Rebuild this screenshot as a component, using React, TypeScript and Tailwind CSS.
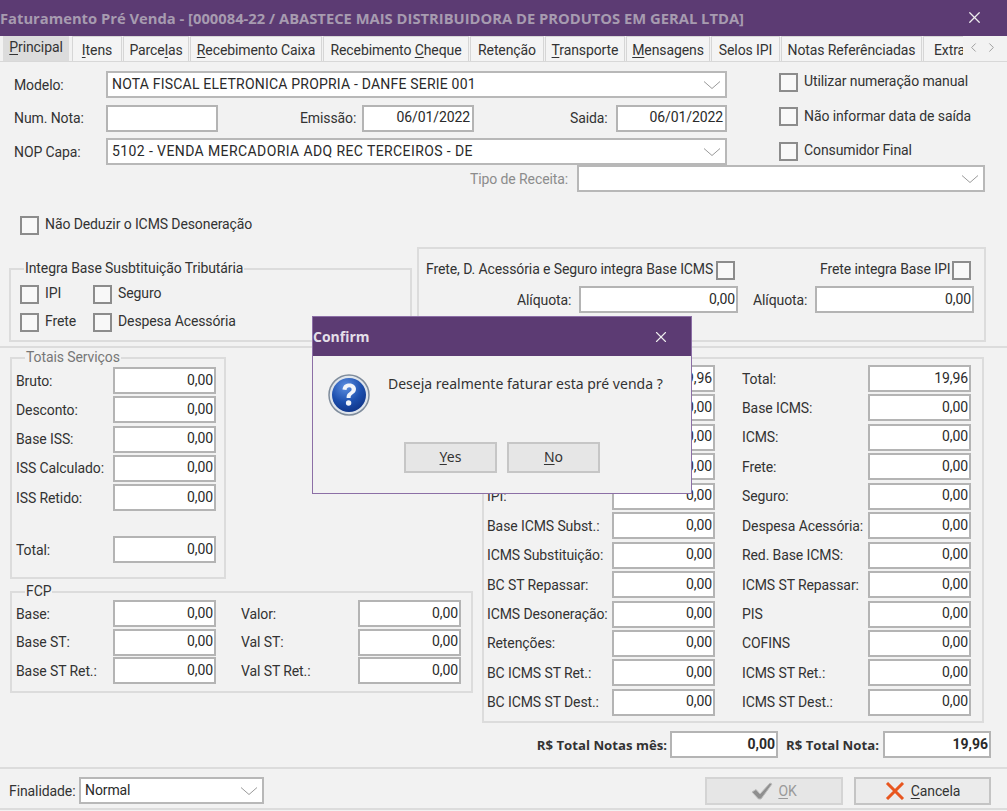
import React from "react";
import { ChevronLeft, ChevronRight, X } from "lucide-react";

const tabs = [
  { before: "", key: "P", after: "rincipal", w: "w-[66px]", active: true },
  { before: "", key: "I", after: "tens", w: "w-[50px]" },
  { before: "Parce", key: "l", after: "as", w: "w-[66px]" },
  { before: "", key: "R", after: "ecebimento Caixa", w: "w-[132px]" },
  { before: "Recebimento ", key: "C", after: "heque", w: "w-[146px]" },
  { before: "Retenção", key: "", after: "", w: "w-[74px]" },
  { before: "", key: "T", after: "ransporte", w: "w-[80px]" },
  { before: "", key: "M", after: "ensagens", w: "w-[84px]" },
  { before: "Selos IPI", key: "", after: "", w: "w-[69px]" },
  { before: "Notas Referênciadas", key: "", after: "", w: "w-[141px]" },
];

const servicos = ["Bruto:", "Desconto:", "Base ISS:", "ISS Calculado:", "ISS Retido:"];

const fcp = [
  ["Base:", "Valor:"],
  ["Base ST:", "Val ST:"],
  ["Base ST Ret.:", "Val ST Ret.:"],
];

const totais = [
  ["", "19,96", "Total:", "19,96"],
  ["", "0,00", "Base ICMS:", "0,00"],
  ["", "0,00", "ICMS:", "0,00"],
  ["", "0,00", "Frete:", "0,00"],
  ["IPI:", "0,00", "Seguro:", "0,00"],
  ["Base ICMS Subst.:", "0,00", "Despesa Acessória:", "0,00"],
  ["ICMS Substituição:", "0,00", "Red. Base ICMS:", "0,00"],
  ["BC ST Repassar:", "0,00", "ICMS ST Repassar:", "0,00"],
  ["ICMS Desoneração:", "0,00", "PIS", "0,00"],
  ["Retenções:", "0,00", "COFINS", "0,00"],
  ["BC ICMS ST Ret.:", "0,00", "ICMS ST Ret.:", "0,00"],
  ["BC ICMS ST Dest.:", "0,00", "ICMS ST Dest.:", "0,00"],
];

const Field = ({ value = "0,00", className = "w-[103px]", bold = false }: { value?: string; className?: string; bold?: boolean }) => (
  <div
    className={`h-[27px] shrink-0 bg-white border-2 border-[#b4b4b4] flex items-center justify-end pr-[1px] pb-[2px] text-[#2a2a2a] ${bold ? "font-bold" : ""} ${className}`}
  >
    {value}
  </div>
);

const Combo = ({ value = "", className = "" }: { value?: string; className?: string }) => (
  <div className={`h-[27px] bg-white border-2 border-[#b8b8b8] flex items-center justify-between pl-[4px] pr-[4px] pb-[2px] text-[#2a2a2a] ${className}`}>
    <span className="whitespace-nowrap">{value}</span>
    <svg width="18" height="10" viewBox="0 0 18 10" fill="none" stroke="#9a9a9a" strokeWidth="1" className="shrink-0 mt-[2px]">
      <path d="M1 1.5 L9 8.5 L17 1.5" />
    </svg>
  </div>
);

const Check = ({ label, className = "" }: { label?: string; className?: string }) => (
  <div className={`flex items-center gap-[6px] whitespace-nowrap text-[#333] ${className}`}>
    <div className="w-[19px] h-[19px] shrink-0 bg-[#f8f8f8] border-2 border-[#8c8c8c]" />
    {label && <span className="pb-[2px]">{label}</span>}
  </div>
);

const Group = ({ title, muted, className, children }: { title?: string; muted?: boolean; className: string; children: React.ReactNode }) => (
  <div className={`relative border-2 border-[#dcdcdc] ${className}`}>
    {title && (
      <span className={`absolute left-[13px] top-[-11px] h-[18px] leading-[18px] bg-[#f2f2f2] px-[1px] whitespace-nowrap ${muted ? "text-[#777]" : "text-[#333]"}`}>
        {title}
      </span>
    )}
    {children}
  </div>
);

const Key = ({ children }: { children: React.ReactNode }) => <span className="underline underline-offset-2">{children}</span>;

const HelpIcon = () => (
  <svg width="42" height="42" viewBox="0 0 42 42" className="shrink-0">
    <defs>
      <radialGradient id="helpFill" cx="40%" cy="25%" r="85%">
        <stop offset="0%" stopColor="#5d8fe0" />
        <stop offset="55%" stopColor="#1c4fae" />
        <stop offset="100%" stopColor="#0d2f80" />
      </radialGradient>
    </defs>
    <circle cx="21" cy="21" r="20" fill="#dfe5ec" stroke="#7f8c9c" strokeWidth="1.5" />
    <circle cx="21" cy="21" r="17" fill="url(#helpFill)" />
    <path
      d="M14.5 15.5 C15 11 18 9.5 21.5 9.5 C25.5 9.5 28 12 28 15 C28 18 26 19.3 24.3 20.5 C23 21.4 22.6 22.2 22.6 24 L18.6 24 C18.4 21.4 19.2 19.8 21.2 18.4 C22.8 17.3 23.6 16.6 23.6 15.3 C23.6 14 22.7 13.2 21.2 13.2 C19.6 13.2 18.7 14.2 18.5 16 Z"
      fill="#f2f5fa"
    />
    <circle cx="20.6" cy="29" r="2.7" fill="#f2f5fa" />
  </svg>
);

export default function App() {
  return (
    <div className="relative w-[1007px] h-[811px] overflow-hidden bg-[#f2f2f2] text-[14px] leading-[18px] font-['Roboto','Liberation_Sans',sans-serif] tracking-[-0.1px] text-[#333]">
      {/* barra de titulo */}
      <div className="h-[36px] bg-[#5c3b73] flex items-center justify-between pr-[23px] pb-[1px]">
        <span className="font-['Open_Sans',sans-serif] font-bold text-[14.76px] tracking-normal text-[#a79bb0] whitespace-nowrap">
          Faturamento Pré Venda - [000084-22 / ABASTECE MAIS DISTRIBUIDORA DE PRODUTOS EM GERAL LTDA]
        </span>
        <X size={19} strokeWidth={1.6} className="text-[#eee]" />
      </div>

      {/* abas */}
      <div className="h-[26px] pl-[3px] flex items-stretch border-b border-[#d8d8d8]">
        {tabs.map((t) => (
          <div
            key={t.before + t.key}
            className={`${t.w} shrink-0 flex items-center justify-center whitespace-pre ${
              t.active ? "bg-[#dcdcdc] mr-[3px] pb-[3px]" : "bg-[#f4f4f4] border-x border-t border-[#d6d6d6] mr-[1px] pt-[1px]"
            }`}
          >
            <span>
              {t.before}
              {t.key && <Key>{t.key}</Key>}
              {t.after}
            </span>
          </div>
        ))}
        <div className="w-[40px] overflow-hidden pl-[10px] flex items-center bg-[#f4f4f4] border-l border-t border-[#d6d6d6] whitespace-nowrap pt-[1px]">Extras</div>
        <div className="flex items-center pb-[3px] pl-[3px] gap-[3px] text-[#a0a0a0]">
          <ChevronLeft size={15} strokeWidth={1.6} />
          <ChevronRight size={15} strokeWidth={1.6} />
        </div>
      </div>

      {/* cabecalho da nota */}
      <div className="flex pt-[9px] pl-[14px] h-[103px]">
        <div className="w-[713px] flex flex-col gap-[6.5px]">
          <div className="flex items-center">
            <span className="w-[92px]">Modelo:</span>
            <Combo className="w-[621px] tracking-[0.2px]" value="NOTA FISCAL ELETRONICA PROPRIA - DANFE SERIE 001" />
          </div>
          <div className="flex items-center">
            <span className="w-[92px]">Num. Nota:</span>
            <Field value="" className="w-[112px]" />
            <span className="ml-[82px] w-[62px]">Emissão:</span>
            <Field value="06/01/2022" className="w-[112px] pr-[2px]" />
            <span className="ml-[96px] w-[46px]">Saida:</span>
            <Field value="06/01/2022" className="w-[111px] pr-[2px]" />
          </div>
          <div className="flex items-center">
            <span className="w-[92px]">NOP Capa:</span>
            <Combo className="w-[621px] tracking-[0.4px]" value="5102 - VENDA MERCADORIA ADQ REC TERCEIROS - DE" />
          </div>
        </div>
        <div className="ml-[52px] flex flex-col gap-[14.5px] pt-[1px]">
          <Check label="Utilizar numeração manual" />
          <Check label="Não informar data de saída" />
          <Check label="Consumidor Final" />
        </div>
      </div>

      <div className="flex items-center h-[27px] ml-[470px]">
        <span className="w-[107px] text-[#8c8c8c]">Tipo de Receita:</span>
        <Combo className="w-[408px]" />
      </div>

      <Check label="Não Deduzir o ICMS Desoneração" className="ml-[20px] mt-[23px]" />

      {/* bases */}
      <div className="flex items-end pl-[9px] h-[99px] mt-[14px] border-b-2 border-[#dcdcdc]">
        <Group title="Integra Base Susbtituição Tributária" className="w-[403px] h-[74px] mb-[4px] grid grid-cols-[73px_1fr] content-start gap-y-[8px] pl-[9px] pt-[14px]">
          <Check label="IPI" />
          <Check label="Seguro" />
          <Check label="Frete" />
          <Check label="Despesa Acessória" />
        </Group>
        <Group className="w-[569px] ml-[5px] h-[95px] mb-[4px] pt-[11px]">
          <div className="flex items-center pl-[7px]">
            <span className="w-[290px] whitespace-nowrap pb-[2px]">Frete, D. Acessória e Seguro integra Base ICMS</span>
            <Check />
            <span className="ml-[85px] w-[132px] whitespace-nowrap pb-[2px]">Frete integra Base IPI</span>
            <Check />
          </div>
          <div className="flex items-center mt-[6px] pl-[98px]">
            <span className="w-[62px]">Alíquota:</span>
            <Field className="w-[159px]" />
            <span className="ml-[15px] w-[62px]">Alíquota:</span>
            <Field className="w-[159px]" />
          </div>
        </Group>
      </div>

      {/* totais */}
      <div className="flex pl-[10px] pt-[9px]">
        <div className="w-[472px]">
          <Group title="Totais Serviços" muted className="w-[216px] h-[222px] pt-[8px] pl-[4px]">
            <div className="flex flex-col gap-[2.25px]">
              {servicos.map((s) => (
                <div key={s} className="flex items-center">
                  <span className="w-[97px] whitespace-nowrap">{s}</span>
                  <Field />
                </div>
              ))}
            </div>
            <div className="flex items-center mt-[25px]">
              <span className="w-[97px]">Total:</span>
              <Field />
            </div>
          </Group>
          <Group title="FCP" className="w-[463px] h-[102px] mt-[12px] pt-[7px] pl-[4px]">
            <div className="flex flex-col gap-[1.5px]">
              {fcp.map(([a, b]) => (
                <div key={a} className="flex items-center">
                  <span className="w-[97px] whitespace-nowrap">{a}</span>
                  <Field />
                  <span className="ml-[25px] w-[117px] whitespace-nowrap">{b}</span>
                  <Field />
                </div>
              ))}
            </div>
          </Group>
        </div>

        <Group className="w-[502px] h-[366px] pt-[6px] pl-[3px]">
          <div className="flex flex-col gap-[2.45px]">
            {totais.map(([a, v1, b, v2], i) => (
              <div key={i} className="flex items-center">
                <span className="w-[125px] whitespace-nowrap">{a}</span>
                <Field value={v1} />
                <span className="ml-[27px] w-[126px] whitespace-nowrap">{b}</span>
                <Field value={v2} />
              </div>
            ))}
          </div>
        </Group>
      </div>

      <div className="flex items-center justify-end pr-[16px] h-[27px] mt-[8px] font-bold tracking-normal text-[14px]">
        <span className="mr-[3px] whitespace-nowrap font-['Open_Sans',sans-serif] text-[13.2px]">R$ Total Notas mês:</span>
        <Field value="0,00" bold className="w-[108px]" />
        <span className="ml-[8px] mr-[5px] w-[92px] whitespace-nowrap font-['Open_Sans',sans-serif] text-[13.2px]">R$ Total Nota:</span>
        <Field value="19,96" bold className="w-[108px]" />
      </div>

      {/* rodape */}
      <div className="mt-[9px] h-[43px] border-t-2 border-[#dcdcdc] border-b-2 flex items-start pt-[8px] pl-[9px] pr-[16px]">
        <span className="w-[70px] pt-[5px]">Finalidade:</span>
        <Combo value="Normal" className="w-[185px]" />
        <div className="ml-auto w-[138px] h-[28px] bg-[#e6e6e6] border-2 border-[#d4d4d4] flex items-center justify-center gap-[5px] text-[#9a9a9a]">
          <svg width="22" height="18" viewBox="0 0 22 18">
            <path d="M1 10 L5 7.5 L9 12 L19 1 L21 2 L10 17 L7.5 17 Z" fill="#8f8f8f" stroke="#bdbdbd" strokeWidth="1" />
          </svg>
          <span><Key>O</Key>K</span>
        </div>
        <div className="ml-[11px] w-[137px] h-[28px] bg-[#ebebeb] border-2 border-[#c4c4c4] flex items-center justify-center gap-[6px] text-[#333]">
          <svg width="20" height="18" viewBox="0 0 20 18" fill="none" stroke="#e8561f" strokeWidth="3">
            <path d="M2 1 L18 17 M18 1 L2 17" />
          </svg>
          <span><Key>C</Key>ancela</span>
        </div>
      </div>

      {/* dialogo de confirmacao */}
      <div className="absolute left-[312px] top-[316px] w-[380px] h-[178px] bg-[#f2f2f2] border border-[#8c6fa6]">
        <div className="h-[39px] bg-[#5c3b73] flex items-center justify-between pr-[21px]">
          <span className="font-['Open_Sans',sans-serif] font-bold text-[14px] tracking-normal text-[#e4dfe8] pt-[1px]">Confirm</span>
          <X size={18} strokeWidth={1.5} className="text-[#eee]" />
        </div>
        <div className="flex pl-[15px] pt-[18px] h-[86px]">
          <HelpIcon />
          <span className="ml-[18px] pt-[1px] font-['Noto_Sans',sans-serif] tracking-normal text-[14px] text-[#333] whitespace-nowrap">
            Deseja realmente faturar esta pré venda ?
          </span>
        </div>
        <div className="flex gap-[10px] pl-[91px]">
          <div className="w-[93px] h-[31px] bg-[#e6e6e6] border-2 border-[#c6c6c6] flex items-center justify-center pb-[2px] font-['Noto_Sans',sans-serif] tracking-normal"><span><Key>Y</Key>es</span></div>
          <div className="w-[93px] h-[31px] bg-[#e6e6e6] border-2 border-[#c6c6c6] flex items-center justify-center pb-[2px] font-['Noto_Sans',sans-serif] tracking-normal"><span><Key>N</Key>o</span></div>
        </div>
      </div>
    </div>
  );
}
